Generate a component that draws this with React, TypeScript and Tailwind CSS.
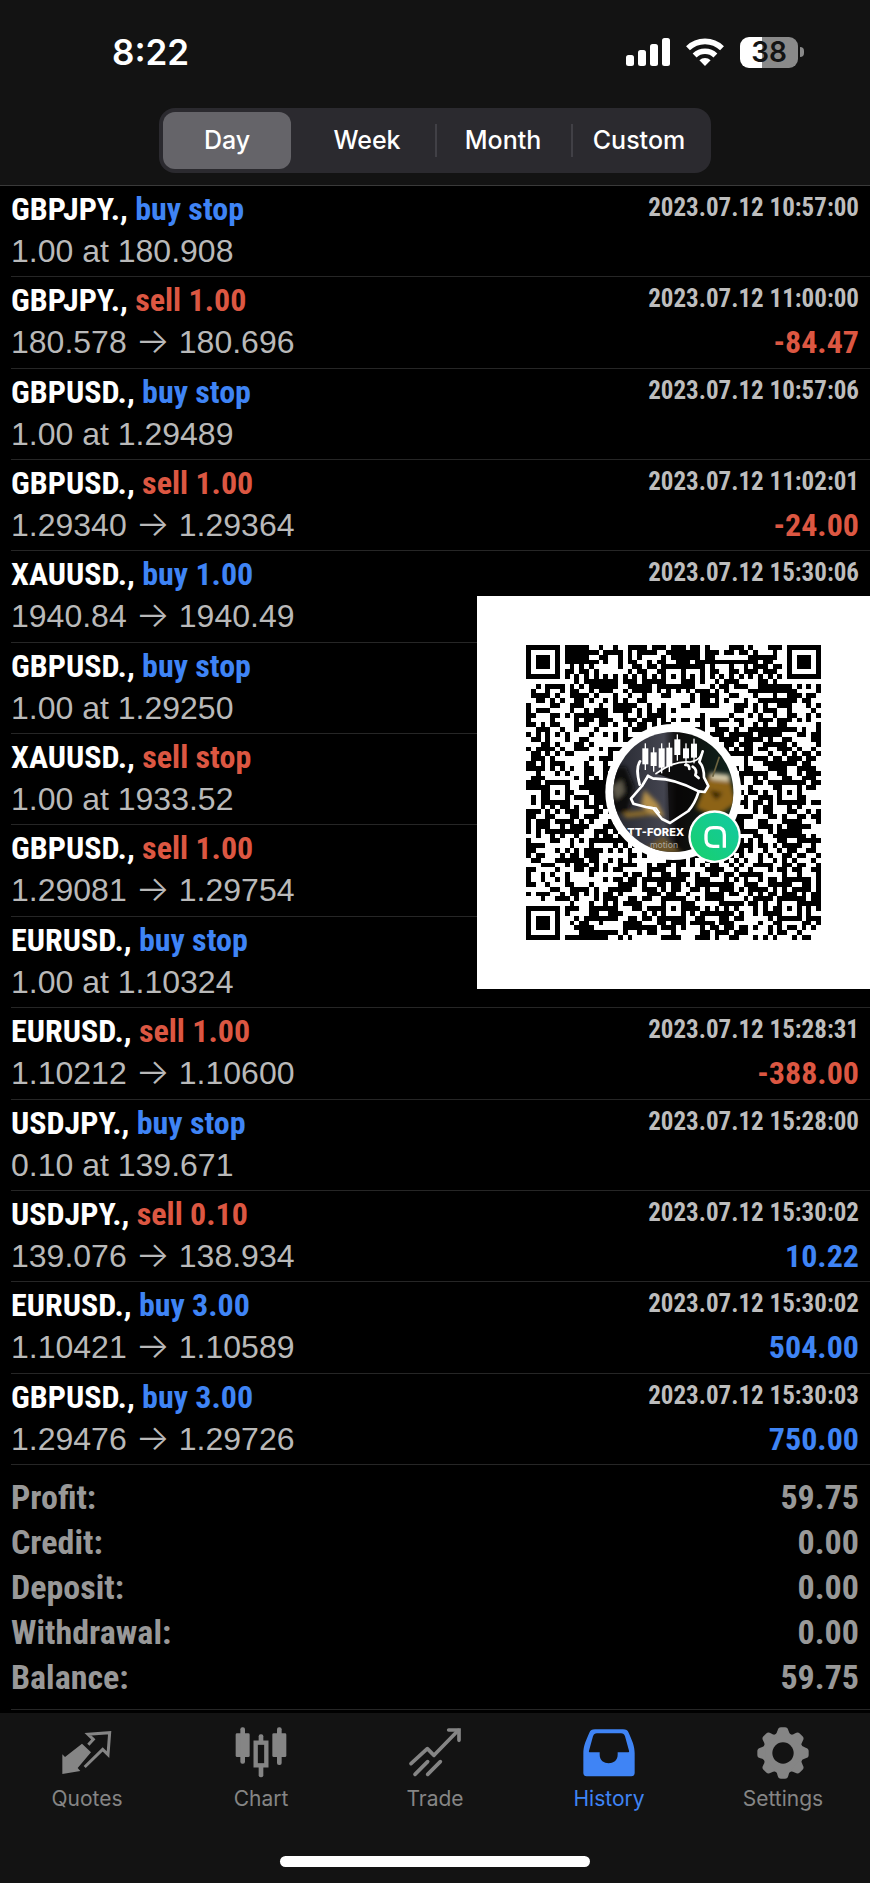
import clsx from "clsx";
import { ReactNode, useState } from "react";

type Side = "buy" | "sell";

type Deal = {
  symbol: string;
  side: Side;
  action: string;
  detail: string;
  closedAt?: string;
  time?: string;
  profit?: string;
};

const deals: Deal[] = [
  { symbol: "GBPJPY.", side: "buy", action: "buy stop", detail: "1.00 at 180.908", time: "2023.07.12 10:57:00" },
  { symbol: "GBPJPY.", side: "sell", action: "sell 1.00", detail: "180.578", closedAt: "180.696", time: "2023.07.12 11:00:00", profit: "-84.47" },
  { symbol: "GBPUSD.", side: "buy", action: "buy stop", detail: "1.00 at 1.29489", time: "2023.07.12 10:57:06" },
  { symbol: "GBPUSD.", side: "sell", action: "sell 1.00", detail: "1.29340", closedAt: "1.29364", time: "2023.07.12 11:02:01", profit: "-24.00" },
  { symbol: "XAUUSD.", side: "buy", action: "buy 1.00", detail: "1940.84", closedAt: "1940.49", time: "2023.07.12 15:30:06" },
  { symbol: "GBPUSD.", side: "buy", action: "buy stop", detail: "1.00 at 1.29250" },
  { symbol: "XAUUSD.", side: "sell", action: "sell stop", detail: "1.00 at 1933.52" },
  { symbol: "GBPUSD.", side: "sell", action: "sell 1.00", detail: "1.29081", closedAt: "1.29754" },
  { symbol: "EURUSD.", side: "buy", action: "buy stop", detail: "1.00 at 1.10324" },
  { symbol: "EURUSD.", side: "sell", action: "sell 1.00", detail: "1.10212", closedAt: "1.10600", time: "2023.07.12 15:28:31", profit: "-388.00" },
  { symbol: "USDJPY.", side: "buy", action: "buy stop", detail: "0.10 at 139.671", time: "2023.07.12 15:28:00" },
  { symbol: "USDJPY.", side: "sell", action: "sell 0.10", detail: "139.076", closedAt: "138.934", time: "2023.07.12 15:30:02", profit: "10.22" },
  { symbol: "EURUSD.", side: "buy", action: "buy 3.00", detail: "1.10421", closedAt: "1.10589", time: "2023.07.12 15:30:02", profit: "504.00" },
  { symbol: "GBPUSD.", side: "buy", action: "buy 3.00", detail: "1.29476", closedAt: "1.29726", time: "2023.07.12 15:30:03", profit: "750.00" },
];

const summary = [
  ["Profit:", "59.75"],
  ["Credit:", "0.00"],
  ["Deposit:", "0.00"],
  ["Withdrawal:", "0.00"],
  ["Balance:", "59.75"],
];

const periods = ["Day", "Week", "Month", "Custom"];

export default function App() {
  return (
    <main className="relative flex min-h-screen flex-col bg-black font-['Roboto_Condensed','Liberation_Sans',sans-serif]">
      <header className="border-b border-[#3a3a3a] bg-[#131313] font-['Inter',sans-serif] text-white">
        <StatusBar />
        <PeriodPicker />
      </header>
      <ul className="grid grow auto-rows-fr pl-[11px]">
        {deals.map((deal, i) => (
          <DealRow key={i} deal={deal} />
        ))}
      </ul>
      <Summary />
      <TabBar />
      <QrCard />
    </main>
  );
}

function StatusBar() {
  return (
    <div className="flex h-[104px] items-center justify-between pr-[66px] pl-28">
      <span className="text-[35px] font-semibold">8:22</span>
      <div className="flex items-center gap-4">
        <svg className="h-7 w-11" viewBox="0 0 44 28" fill="#fff">
          <rect x="0" y="17" width="8" height="11" rx="2.5" />
          <rect x="12" y="12" width="8" height="16" rx="2.5" />
          <rect x="24" y="6" width="8" height="22" rx="2.5" />
          <rect x="36" y="0" width="8" height="28" rx="2.5" />
        </svg>
        <svg className="h-7 w-[38px]" viewBox="0 0 38 28" fill="none" stroke="#fff" strokeWidth="5.6">
          <path d="M2 10.2a24.500 24.500 0 0 1 34 0" />
          <path d="M8.600 17.400a15 15 0 0 1 20.800 0" />
          <path d="M19 28l-5.600-5.800a8.200 8.200 0 0 1 11.200 0z" fill="#fff" stroke="none" />
        </svg>
        <div className="flex items-center gap-0.5">
          <span className="flex h-[31px] w-[58px] items-center justify-center rounded-[9px] bg-linear-to-r from-white from-38% to-[#8a8a8a] to-38% text-[28px] leading-none font-semibold text-[#131313]">
            38
          </span>
          <span className="h-2.5 w-1 rounded-r-full bg-[#8a8a8a]" />
        </div>
      </div>
    </div>
  );
}

function PeriodPicker() {
  const [period, setPeriod] = useState("Day");

  return (
    <div className="flex justify-center pt-1 pb-3">
      <div className="grid w-[552px] grid-cols-4 rounded-2xl bg-[#2b2a2f] p-1">
        {periods.map((name, i) => (
          <div key={name} className="relative">
            {i > 1 && <span className="absolute top-3 bottom-3 left-0 w-0.5 bg-[#414046]" />}
            <button
              onClick={() => setPeriod(name)}
              className={clsx(
                "h-[57px] text-[25px] font-medium",
                name === period ? "w-32 rounded-xl bg-[#656469]" : "w-full"
              )}
            >
              {name}
            </button>
          </div>
        ))}
      </div>
    </div>
  );
}

function DealRow({ deal }: { deal: Deal }) {
  return (
    <li className="flex justify-between border-b border-[#262626] pt-px pr-[11px]">
      <div>
        <p className="text-[32px] leading-[44px] font-bold text-white">
          {deal.symbol},{" "}
          <span className={deal.side === "buy" ? "text-[#3f84f5]" : "text-[#dc5742]"}>
            {deal.action}
          </span>
        </p>
        <p className="font-['Liberation_Sans',sans-serif] text-[32px] leading-[40px] text-[#b9b9b9]">
          {deal.detail}
          {deal.closedAt && (
            <>
              {" "}
              <span className="font-['Inter',sans-serif] text-4xl leading-none font-light">→</span>{" "}
              {deal.closedAt}
            </>
          )}
        </p>
      </div>
      <div className="text-right font-bold">
        {deal.time && (
          <p className="text-[25px] leading-[42px] text-[#bdbdbd]">{deal.time}</p>
        )}
        {deal.profit && (
          <p
            className={clsx(
              "text-[32px] leading-[44px]",
              deal.profit.startsWith("-") ? "text-[#dc5742]" : "text-[#3f84f5]"
            )}
          >
            {deal.profit}
          </p>
        )}
      </div>
    </li>
  );
}

function Summary() {
  return (
    <div className="pb-[3px] pl-[11px]">
      <dl className="border-b border-[#262626] pt-[10px] pr-[11px] pb-[9px] text-[34px] leading-[45px] font-bold text-[#989898]">
        {summary.map(([label, value]) => (
          <div key={label} className="flex justify-between">
            <dt>{label}</dt>
            <dd>{value}</dd>
          </div>
        ))}
      </dl>
    </div>
  );
}

function TabBar() {
  return (
    <footer className="bg-[#131313] pb-4 font-['Inter',sans-serif]">
      <nav className="grid h-[143px] grid-cols-5 items-start pt-3 text-[21px] leading-7 text-[#858585]">
        <Tab label="Quotes">
          <svg className="size-14" viewBox="176 794 168 168" fill="currentColor">
            <path d="M186 882l8 8 51-40 27 26-40 47 8 9-54 9z" />
            <path
              d="M264 853l15-16-16-15 65-5-5 66-16-16-54 53"
              fill="none"
              stroke="currentColor"
              strokeWidth="9"
            />
          </svg>
        </Tab>
        <Tab label="Chart">
          <svg className="size-14" viewBox="698 794 168 168" fill="currentColor">
            <rect x="706" y="819" width="42" height="71" rx="4" />
            <rect x="720" y="801" width="14" height="109" rx="6" />
            <rect x="816" y="819" width="42" height="71" rx="4" />
            <rect x="830" y="801" width="14" height="113" rx="6" />
            <rect x="775" y="822" width="14" height="26" rx="6" />
            <rect x="775" y="914" width="14" height="37" rx="6" />
            <rect x="766" y="847" width="32" height="68" fill="none" stroke="currentColor" strokeWidth="13" />
          </svg>
        </Tab>
        <Tab label="Trade">
          <svg
            className="size-14"
            viewBox="1221 794 168 168"
            fill="none"
            stroke="currentColor"
            strokeWidth="11"
            strokeLinecap="round"
            strokeLinejoin="round"
          >
            <path d="M1233 910l49-45 20 20 73-75" />
            <path d="M1346 809h31v31" strokeLinejoin="miter" />
            <path d="M1245 942l38-38M1283 942l38-38" />
          </svg>
        </Tab>
        <Tab label="History" active>
          <svg className="size-14" viewBox="436 794 168 168" fill="currentColor">
            <path
              fillRule="evenodd"
              d="M478 807h84c9 0 14 3 17 10 10 23 18 39 18 62v59c0 6-4 10-10 10H453c-6 0-10-4-10-10v-59c0-23 8-39 18-62 3-7 8-10 17-10zM484 819c-7 0-9 2-12 9l-12 43c-1 4 0 5 4 5h28v7c0 34 54 34 54 0v-7h30c4 0 5-1 4-5l-12-43c-3-7-5-9-12-9z"
            />
          </svg>
        </Tab>
        <Tab label="Settings">
          <svg className="size-14" viewBox="-84 -84 168 168" fill="currentColor">
            <circle r="60" />
            {[0, 45, 90, 135, 180, 225, 270, 315].map((angle) => (
              <path
                key={angle}
                d="M-26-52Q-18-58-16-68-14-77-6-77H6Q14-77 16-68 18-58 26-52z"
                transform={`rotate(${angle})`}
              />
            ))}
            <circle r="32" fill="#131313" />
          </svg>
        </Tab>
      </nav>
      <div className="mx-auto h-[11px] w-[310px] rounded-full bg-white" />
    </footer>
  );
}

function Tab({ label, active, children }: { label: string; active?: boolean; children: ReactNode }) {
  return (
    <a
      href={`#${label.toLowerCase()}`}
      className={clsx("flex flex-col items-center gap-1", active && "text-[#3f84f5]")}
    >
      {children}
      <span>{label}</span>
    </a>
  );
}

const QR_SIZE = 61;
const finders = [
  [0, 0],
  [54, 0],
  [0, 54],
];
const alignments = [
  [30, 6],
  [6, 30],
  [54, 30],
  [30, 54],
  [54, 54],
];

function qrModule(x: number, y: number, noise: number) {
  for (const [fx, fy] of finders) {
    const d = Math.max(Math.abs(x - fx - 3), Math.abs(y - fy - 3));
    if (d <= 4) return d !== 4 && d !== 2;
  }
  for (const [ax, ay] of alignments) {
    const d = Math.max(Math.abs(x - ax), Math.abs(y - ay));
    if (d <= 2) return d !== 1;
  }
  if (x === 6 || y === 6) return (x + y) % 2 === 0;
  return noise > 0.48;
}

function qrPath() {
  let seed = 20230712;
  let d = "";
  for (let y = 0; y < QR_SIZE; y++) {
    for (let x = 0; x < QR_SIZE; x++) {
      seed = (Math.imul(seed, 1664525) + 1013904223) >>> 0;
      if (qrModule(x, y, seed / 4294967296)) d += `M${x} ${y}h1v1h-1z`;
    }
  }
  return d;
}

const qr = qrPath();

const candles = [
  [499, 475, 48],
  [524, 487, 41],
  [548, 475, 58],
  [571, 473, 56],
  [595, 448, 47],
  [621, 475, 30],
  [645, 461, 42],
];

function QrCard() {
  return (
    <div className="absolute top-[596px] right-0 w-[393px] bg-white">
      <svg className="block w-full" viewBox="3 18 1179 1179" role="img" aria-label="QR code">
        <defs>
          <clipPath id="photo">
            <circle cx="592" cy="606" r="180" />
          </clipPath>
          <linearGradient id="backdrop">
            <stop offset="0" stopColor="#24262e" />
            <stop offset="0.42" stopColor="#43444f" />
            <stop offset="0.52" stopColor="#0d0b0a" />
            <stop offset="1" stopColor="#10261f" />
          </linearGradient>
          <linearGradient id="badge" x1="0" y1="1" x2="1" y2="0">
            <stop offset="0" stopColor="#18d06c" />
            <stop offset="1" stopColor="#12c9a4" />
          </linearGradient>
          <filter id="soft">
            <feGaussianBlur stdDeviation="7" />
          </filter>
        </defs>
        <path d={qr} transform="translate(150 165) scale(14.500)" shapeRendering="crispEdges" />
        <circle cx="592" cy="606" r="204" fill="#fff" />
        <g clipPath="url(#photo)">
          <path d="M400 420h390v380H400z" fill="url(#backdrop)" />
          <g filter="url(#soft)">
            <path d="M400 530h50l25 60-20 80h-55z" fill="#0c0b0b" />
            <path d="M408 590l30-20 8 35-25 25" fill="#5f5a4c" />
            <path d="M440 668l70-8 15 16-75 8z" fill="#8a6a2a" />
            <path d="M505 600l40 40 20 40-40-5-30-30z" fill="#b48f4a" />
            <path d="M700 550l60 10 20 80-60 40-60-25z" fill="#8d6318" />
            <path d="M705 548l55 6v20l-55-6z" fill="#d8cfae" />
            <path d="M700 600l40 10-20 20z" fill="#2a1a06" />
            <path d="M490 790l70-50 60 50z" fill="#6b5226" />
          </g>
          <path d="M730 500l-20 60" stroke="#6d6440" strokeWidth="5" />
          <path d="M575 570l40 6 50 30-30 54-55 36z" fill="#070606" opacity=".7" />
          <path d="M545 552q50-38 100-36l30-20 8 60 14 30-12 20-70-30z" fill="#0b0b0c" />
          <g fill="#fff">
            {candles.map(([x, y, h]) => (
              <g key={x}>
                <rect x={x} y={y} width="18" height={h} />
                <rect x={x + 7} y={y - 15} width="4" height={h + 32} />
              </g>
            ))}
          </g>
          <g fill="none" stroke="#fff" strokeWidth="8" strokeLinejoin="round" strokeLinecap="round">
            <path d="M492 514c-12 18-8 42-1 70" />
            <path d="M516 558l-18 30-33 38 7 15 38 10 22 4 26 32 24 12 55-36q20-22 31-58" />
            <path d="M516 558l16 8c50-2 95 16 136 38l18 2 11-18-13-26c0-20-2-34-14-46l10-32" />
            <path d="M540 551c40-30 70-38 102-35 18-2 28-8 34-22" strokeWidth="5" />
            <path d="M628 525c8-2 12 4 12 12M650 530c10 6 12 16 8 26l10 8" />
            <path d="M518 652l22 2 10 14" strokeWidth="5" />
          </g>
          <text x="454" y="738" fill="#fff" fontFamily="Inter, sans-serif" fontSize="33" fontWeight="800">
            TT-FOREX
          </text>
          <text x="522" y="774" fill="#a9a79f" fontFamily="Inter, sans-serif" fontSize="26">
            motion
          </text>
        </g>
        <circle cx="716" cy="740" r="79" fill="#fff" />
        <circle cx="716" cy="740" r="72" fill="url(#badge)" />
        <path
          d="M730 769h-18c-15 0-22-8-22-21v-13c0-14 8-22 22-22h12c14 0 21 8 21 22v38"
          fill="none"
          stroke="#fff"
          strokeWidth="10"
        />
      </svg>
    </div>
  );
}
